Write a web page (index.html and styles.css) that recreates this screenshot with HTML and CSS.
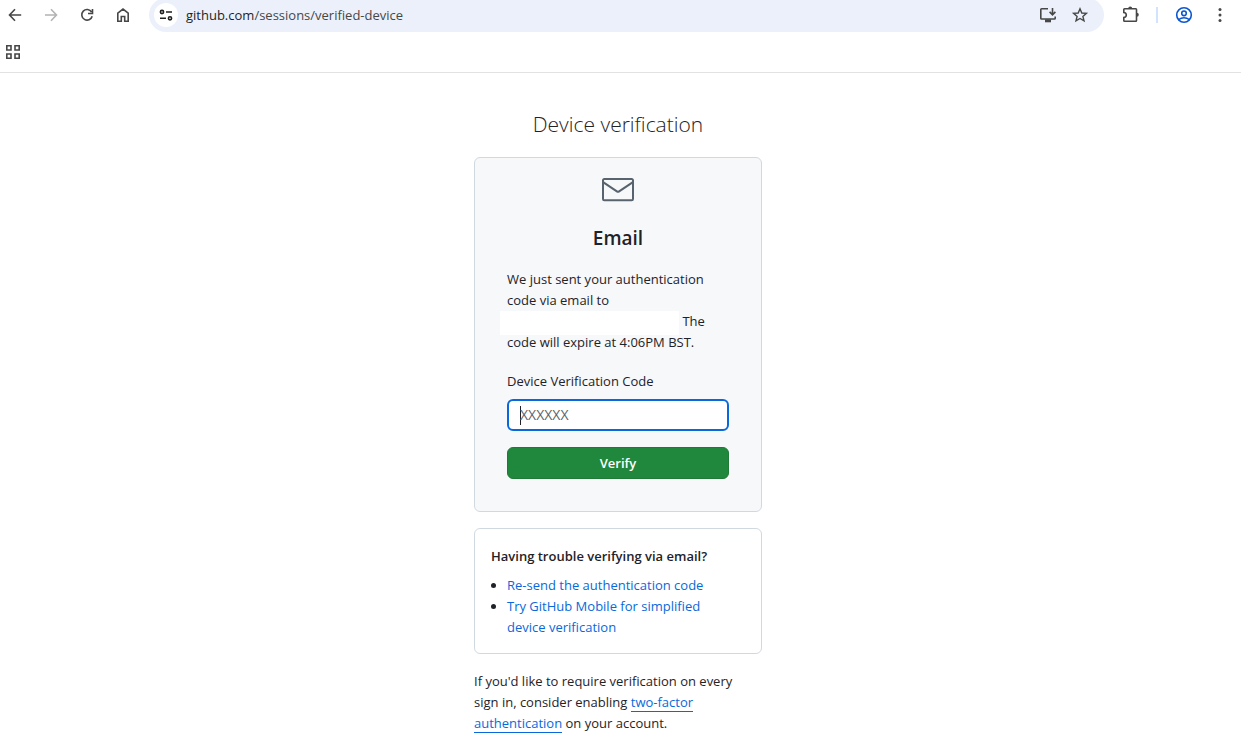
FILE: index.html
```html
<!DOCTYPE html>
<html lang="en">
<head>
<meta charset="utf-8">
<title>Device verification</title>
<meta name="viewport" content="width=device-width, initial-scale=1">
<link rel="stylesheet" href="styles.css">
</head>
<body>
<header class="browser">
  <div class="toolbar">
    <nav class="nav-buttons" aria-label="Browser navigation">
      <button class="icon-button" type="button" aria-label="Back"><svg viewBox="0 0 24 24"><path d="M18.200 12H7M12 6.200L6.500 12l5.500 5.800"/></svg></button>
      <button class="icon-button is-disabled" type="button" aria-label="Forward"><svg viewBox="0 0 24 24"><path d="M6 12h11M12 6.200l5.500 5.800-5.500 5.800"/></svg></button>
      <button class="icon-button" type="button" aria-label="Reload"><svg viewBox="0 0 24 24"><path d="M16.600 9A5.300 5.300 0 1 0 17.200 13.200M17.500 6v4.500H13"/></svg></button>
      <button class="icon-button" type="button" aria-label="Home"><svg viewBox="0 0 24 24"><path d="M6.800 18.200V10.200L12 6.100l5.200 4.100v8h-3.500v-4.700h-3.400v4.700z"/></svg></button>
    </nav>
    <div class="address-bar">
      <button class="site-button" type="button" aria-label="View site information"><svg viewBox="0 0 24 24"><circle cx="8" cy="9" r="1.600"/><path d="M12 9h6M6 15.300h6"/><circle cx="16" cy="15.300" r="1.600"/></svg></button>
      <span class="url">github.com<span class="url-path">/sessions/verified-device</span></span>
      <button class="icon-button" type="button" aria-label="Install app"><svg viewBox="0 0 24 24"><path d="M12 5.800H5.600Q4.800 5.800 4.800 6.600V15.200Q4.800 16 5.600 16H18.400Q19.200 16 19.200 15.200V13.500M16.500 5v6.500M13.600 8.900l2.900 2.900 2.900-2.900"/><path d="M9 17.800h6" class="thick"/></svg></button>
      <button class="icon-button" type="button" aria-label="Bookmark this page"><svg viewBox="0 0 24 24"><path class="fine" d="M12 5.800l1.800 4.200 4.600.4-3.500 3 1.100 4.500-4-2.400-4 2.400 1.100-4.500-3.500-3 4.600-.4z"/></svg></button>
    </div>
    <div class="tools">
      <button class="icon-button" type="button" aria-label="Extensions"><svg viewBox="0 0 24 24"><path d="M5.500 5.800H16.800Q17.500 5.800 17.500 6.500V17.500Q17.500 18.200 16.800 18.200H5.500Q4.800 18.200 4.800 17.500V14.500Q7.300 14.300 7.300 12T4.800 9.500V6.500Q4.800 5.800 5.500 5.800z"/><path class="dot" d="M9.200 5.500a2 2 0 0 1 4 0zM17.800 9.800a2 2 0 0 1 0 4z"/></svg></button>
      <span class="divider"></span>
      <button class="icon-button is-profile" type="button" aria-label="Profile"><svg viewBox="0 0 24 24"><circle cx="12" cy="12" r="7.300"/><circle cx="12" cy="10.300" r="2.300"/><path d="M6.500 16.700Q12 12.900 17.500 16.700"/></svg></button>
      <button class="icon-button" type="button" aria-label="Menu"><svg viewBox="0 0 24 24"><g class="dot"><circle cx="12" cy="6.500" r="1.500"/><circle cx="12" cy="12" r="1.500"/><circle cx="12" cy="17.500" r="1.500"/></g></svg></button>
    </div>
  </div>
  <div class="bookmarks">
    <button class="icon-button" type="button" aria-label="Apps"><svg viewBox="0 0 24 24"><path d="M5.800 5.800h4.200v4.200H5.800zM14 5.800h4.200v4.200H14zM5.800 14h4.200v4.200H5.800zM14 14h4.200v4.200H14z"/></svg></button>
  </div>
</header>

<main class="page">
  <div class="column">
    <h1 class="title">Device verification</h1>

    <section class="card verify-card">
      <svg class="mail" viewBox="0 0 24 24" aria-hidden="true"><path d="M1.750 3h20.500c.966 0 1.750.784 1.750 1.750v14a1.750 1.750 0 0 1-1.750 1.750H1.750A1.750 1.750 0 0 1 0 18.750v-14C0 3.784.784 3 1.750 3ZM1.500 7.412V18.750c0 .138.112.250.250.250h20.500a.25.25 0 0 0 .25-.25V7.412l-9.520 6.433c-.592.400-1.368.400-1.960 0Zm0-2.662v.852l10.360 7a.25.25 0 0 0 .28 0l10.360-7V4.750a.25.25 0 0 0-.25-.25H1.750a.25.25 0 0 0-.25.25Z"/></svg>
      <h2 class="method">Email</h2>
      <p class="message">We just sent your authentication code via email to <br><span class="address"></span> The code will expire at 4:06PM BST.</p>
      <form class="form">
        <label class="label" for="otp">Device Verification Code</label>
        <input class="field" id="otp" type="text" placeholder="XXXXXX" autocomplete="off">
        <button class="verify" type="submit">Verify</button>
      </form>
    </section>

    <section class="card help-card">
      <h3 class="help-title">Having trouble verifying via email?</h3>
      <ul class="help-list">
        <li><a href="#resend">Re-send the authentication code</a></li>
        <li><a href="#mobile">Try GitHub Mobile for simplified device verification</a></li>
      </ul>
    </section>

    <p class="note">If you'd like to require verification on every sign in, consider enabling <a class="underlined" href="#2fa">two-factor authentication</a> on your account.</p>
  </div>
</main>
</body>
</html>
```
FILE: styles.css
```css
* {
  box-sizing: border-box;
}

body {
  margin: 0;
  background: #fff;
  color: #1f2328;
  font-family: "Open Sans", "Noto Sans", sans-serif;
  font-size: 13px;
  line-height: 21px;
}

h1, h2, h3, p, ul {
  margin: 0;
}

button, input {
  font: inherit;
}

a {
  color: #0969da;
  text-decoration: none;
}

.browser {
  border-bottom: 1px solid #e1e3e1;
}

.toolbar {
  display: flex;
  align-items: center;
  height: 34px;
  margin-top: -2px;
  padding: 0 9px 0 3px;
}

.nav-buttons {
  display: flex;
  gap: 12px;
  margin-right: 14px;
}

.icon-button, .site-button {
  flex: none;
  width: 24px;
  height: 24px;
  padding: 0;
  border: 0;
  background: none;
  color: #474747;
}

.icon-button svg, .site-button svg {
  display: block;
  width: 24px;
  height: 24px;
  fill: none;
  stroke: currentColor;
  stroke-width: 1.6;
}

.icon-button .dot {
  fill: currentColor;
  stroke: none;
}

.icon-button .fine {
  stroke-width: 1.4;
}

.icon-button .thick {
  stroke-width: 3;
}

.is-disabled {
  color: #b3b3b3;
}

.is-profile {
  color: #0b57d0;
}

.address-bar {
  display: flex;
  flex: 1;
  align-items: center;
  gap: 8px;
  height: 34px;
  padding: 0 12px 0 5px;
  border-radius: 17px;
  background: #ebf0fa;
}

.site-button {
  border-radius: 50%;
  background: #fff;
  color: #1f1f1f;
}

.url {
  flex: 1;
  color: #1f1f1f;
}

.url-path {
  color: #474747;
}

.tools {
  display: flex;
  align-items: center;
  gap: 12px;
  margin-left: 15px;
}

.divider {
  width: 2px;
  height: 16px;
  margin: 0 2px 0 1px;
  background: #d3e3fd;
}

.bookmarks {
  display: flex;
  align-items: center;
  height: 40px;
  padding-left: 1px;
}

.page {
  display: flex;
  justify-content: center;
  padding: 32px 5px 0 0;
}

.column {
  width: 288px;
}

.title {
  margin-bottom: 14px;
  font-size: 21px;
  font-weight: 300;
  line-height: 38px;
  text-align: center;
}

.card {
  border: 1px solid #d1d9e0;
  border-radius: 6px;
}

.verify-card {
  padding: 16px 32px 32px;
  background: #f6f8fa;
}

.mail {
  display: block;
  width: 32px;
  height: 32px;
  margin: 0 auto 16px;
  fill: #59636e;
}

.method {
  margin-bottom: 15px;
  font-size: 19px;
  font-weight: 600;
  line-height: 32px;
  text-align: center;
}

.message {
  margin-bottom: 18px;
}

.address {
  display: inline-block;
  width: 179px;
  height: 24px;
  margin: -3px 0 -3px -7px;
  background: #fff;
  vertical-align: middle;
}

.form {
  display: flex;
  flex-direction: column;
}

.label {
  margin-bottom: 7px;
}

.field {
  width: 100%;
  height: 32px;
  margin-bottom: 16px;
  padding: 2px 11px 4px;
  border: 2px solid #0969da;
  border-radius: 6px;
  outline: 0;
  background: #fff linear-gradient(#1f2328, #1f2328) 11px 5px / 1px 19px no-repeat;
  color: #1f2328;
  font-size: 14px;
}

.field::placeholder {
  color: #59636e;
}

.verify {
  height: 32px;
  border: 1px solid #1f7a37;
  border-radius: 6px;
  background: #1f883d;
  color: #fff;
  font-weight: 600;
}

.help-card {
  margin: 16px 0;
  padding: 17px 16px 15px;
}

.help-title {
  margin-bottom: 8px;
  font-size: 13px;
  font-weight: 600;
}

.help-list {
  padding: 0 16px;
}

.note {
  padding: 1px 16px 0 0;
}

.underlined {
  border-bottom: 1px solid #0969da;
}
```
